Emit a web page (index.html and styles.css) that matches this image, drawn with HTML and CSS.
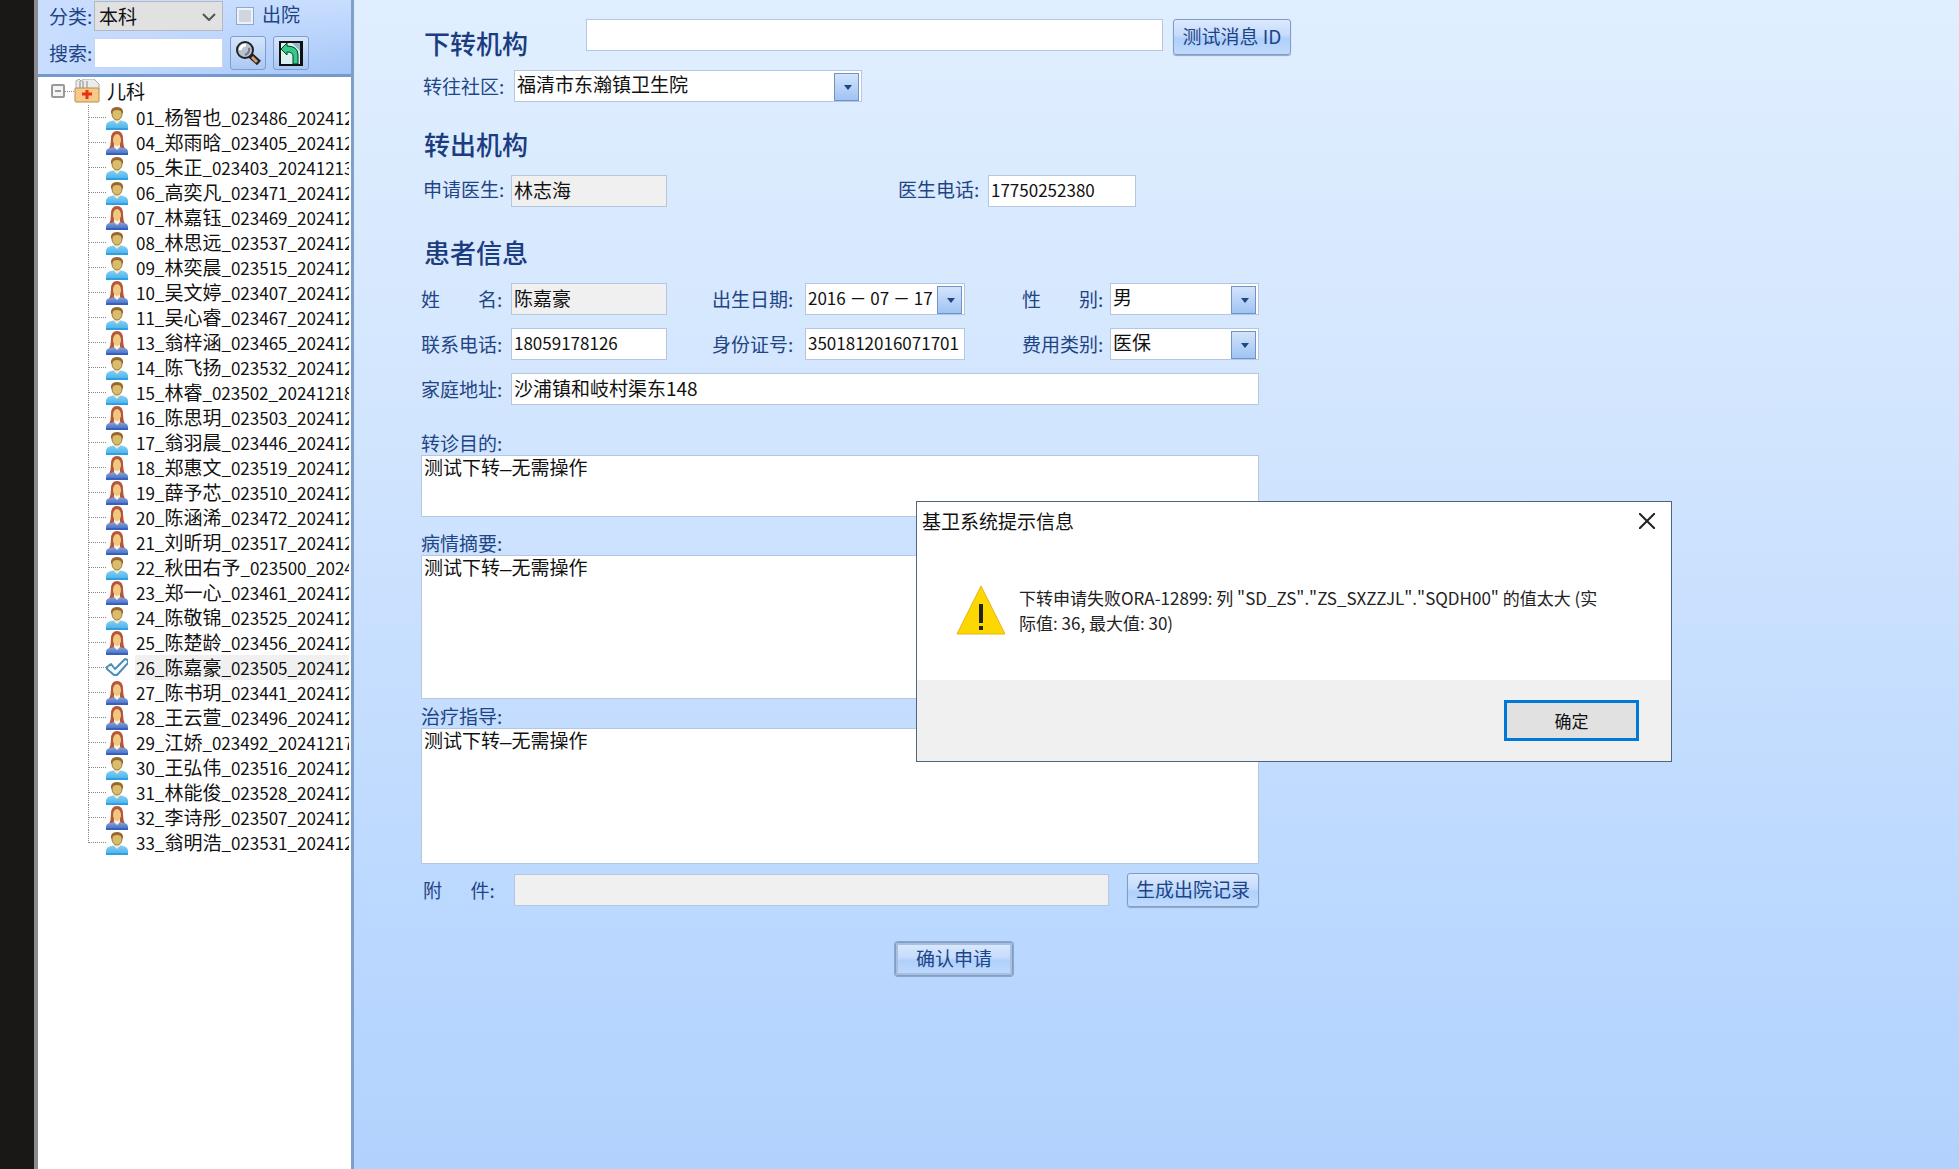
FILE: index.html
```html
<!DOCTYPE html>
<html lang="zh-CN">
<head>
  <meta charset="UTF-8">
  <meta name="viewport" content="width=device-width, initial-scale=1.0">
  <title>下转申请</title>
  <link rel="stylesheet" href="styles.css">
</head>
<body>
  <!-- Icons shared by the patient tree -->
  <svg class="sprite" aria-hidden="true">
    <defs>
      <linearGradient id="shirt" x1="0" y1="0" x2="0" y2="1"><stop offset="0" stop-color="#8bd0f2"/><stop offset="1" stop-color="#3fb0ec"/></linearGradient>
      <linearGradient id="dress" x1="0" y1="0" x2="0" y2="1"><stop offset="0" stop-color="#8aa4dc"/><stop offset="1" stop-color="#3a66c4"/></linearGradient>
    </defs>
    <symbol id="male" viewBox="0 0 22 24">
      <path d="M0 24v-4q0-4 5-5l4-1h4l4 1q5 1 5 5v4z" fill="url(#shirt)"/>
      <path d="M8 12h6v3l-3 3-3-3z" fill="#f6ead0"/>
      <ellipse cx="11" cy="8" rx="5" ry="6" fill="#d9bd6c" stroke="#9a7838"/>
      <path d="M5 8Q4 1 11 1t6 7l-1-1q-1-3-5-3T6 7z" fill="#99662f"/>
      <path d="M0 23h22" stroke="#2f9fe0" stroke-width="2"/>
    </symbol>
    <symbol id="female" viewBox="0 0 22 24">
      <path d="M3 18Q5 14 5 8q0-8 6-8t6 8q0 6 2 10z" fill="#b5553a"/>
      <path d="M0 24v-3q0-4 5-4l3-1h6l3 1q5 0 5 4v3z" fill="url(#dress)"/>
      <path d="M8 12h6v4l-3 3-3-3z" fill="#fff1dc"/>
      <ellipse cx="11" cy="9" rx="4" ry="6" fill="#f0c880"/>
      <path d="M0 23h22" stroke="#3560bd" stroke-width="2"/>
    </symbol>
    <symbol id="check" viewBox="0 0 22 24">
      <path d="M1 11l4-3 4 5L19 3l3 1v3L11 19H8L1 13z" fill="#f4faff" stroke="#4d8eb4" stroke-width="2" stroke-linejoin="round"/>
    </symbol>
  </svg>

  <aside class="sidebar">
    <div class="filter">
      <div class="filter-row">
        <label for="category">分类:</label>
        <span class="category"><select id="category"><option>本科</option></select><svg viewBox="0 0 14 8"><path d="M1 1l6 6 6-6" fill="none" stroke="#555" stroke-width="2"/></svg></span>
        <input type="checkbox" id="discharged" class="tick">
        <label for="discharged" class="tick-label">出院</label>
      </div>
      <div class="filter-row">
        <label for="search">搜索:</label>
        <input type="text" id="search" class="search">
        <button type="button" class="tool" aria-label="查找">
          <svg viewBox="0 0 26 26"><path d="M15 15l9 8" stroke="#222" stroke-width="6"/><path d="M17 17l5 5" stroke="#d89a6a" stroke-width="3"/><circle cx="10" cy="10" r="8" fill="#b9c3cf" stroke="#222" stroke-width="2"/><path d="M5 10q1-5 6-5" fill="none" stroke="#fff" stroke-width="3"/><path d="M14 8q1 5-4 7" fill="none" stroke="#778" stroke-width="2"/></svg>
        </button>
        <button type="button" class="tool" aria-label="返回">
          <svg viewBox="0 0 26 26"><path d="M2 2h22v23H2z" fill="#d9f3ee" stroke="#111" stroke-width="2"/><path d="M14 3h9v9z" fill="#8fb8cc"/><path d="M3 9l6-6v3q11 0 11 9v9h-5v-8q0-4-6-4v3z" fill="#35c98a" stroke="#063b28"/><path d="M23 3v21" stroke="#111" stroke-width="2"/></svg>
        </button>
      </div>
    </div>
    <div class="tree">
      <div class="tree-root">
        <svg class="toggle" viewBox="0 0 14 14"><rect x="1" y="1" width="12" height="12" rx="1" fill="#f4f4f4" stroke="#999" stroke-width="2"/><path d="M4 7h6" stroke="#444"/></svg>
        <i class="dots"></i>
        <svg class="folder" viewBox="0 0 26 24"><path d="M2 10V2l3-2 2 2 3-2h10l5 5v6z" fill="#ececec" stroke="#aaa"/><path d="M6 2v7M9 2v7M13 2v7" stroke="#888"/><rect x="1" y="9" width="24" height="14" rx="1" fill="#f5c98a" stroke="#c08a45"/><path d="M13 11v9M8 15h10" stroke="#e8330f" stroke-width="3"/></svg>
        <span>儿科</span>
      </div>
      <ul class="patients" id="patients"></ul>
    </div>
  </aside>

  <main class="content">
    <form class="referral">
      <div class="row first">
        <h2>下转机构</h2>
        <input type="text" class="message" aria-label="消息 ID">
        <button type="button" class="btn">测试消息 ID</button>
      </div>
      <div class="row community">
        <label for="community">转往社区:</label>
        <span class="combo"><select id="community"><option>福清市东瀚镇卫生院</option></select></span>
      </div>

      <h2>转出机构</h2>
      <div class="row doctor">
        <label for="doctor">申请医生:</label>
        <input type="text" id="doctor" value="林志海" readonly>
        <label for="doctorPhone">医生电话:</label>
        <input type="text" id="doctorPhone" class="num" value="17750252380">
      </div>

      <h2>患者信息</h2>
      <div class="row fields">
        <label for="name">姓　　名:</label>
        <input type="text" id="name" value="陈嘉豪" readonly>
        <label for="birthday">出生日期:</label>
        <span class="combo"><input type="text" id="birthday" class="num" value="2016 － 07 － 17"></span>
        <label for="gender">性　　别:</label>
        <span class="combo"><select id="gender"><option>男</option></select></span>
        <label for="phone">联系电话:</label>
        <input type="text" id="phone" class="num" value="18059178126">
        <label for="idCard">身份证号:</label>
        <input type="text" id="idCard" class="num" value="3501812016071701">
        <label for="feeType">费用类别:</label>
        <span class="combo"><select id="feeType"><option>医保</option></select></span>
        <label for="address">家庭地址:</label>
        <input type="text" id="address" class="wide" value="沙浦镇和岐村渠东148">
      </div>

      <label class="area-label purpose-label" for="purpose">转诊目的:</label>
      <textarea id="purpose" class="purpose">测试下转—无需操作</textarea>
      <label class="area-label summary-label" for="summary">病情摘要:</label>
      <textarea id="summary" class="summary">测试下转—无需操作</textarea>
      <label class="area-label guide-label" for="guide">治疗指导:</label>
      <textarea id="guide" class="guide">测试下转—无需操作</textarea>

      <div class="row attach">
        <label for="attachment">附　&ensp;件:</label>
        <input type="text" id="attachment" readonly>
        <button type="button" class="btn">生成出院记录</button>
      </div>
      <button type="button" class="btn confirm">确认申请</button>
    </form>
  </main>

  <div class="dialog" role="alertdialog" aria-labelledby="dialogTitle">
    <div class="dialog-head">
      <span id="dialogTitle">基卫系统提示信息</span>
      <button type="button" class="close" aria-label="关闭"><svg viewBox="0 0 16 16"><path d="M0 0l16 16M16 0L0 16" stroke="#222" stroke-width="2"/></svg></button>
    </div>
    <div class="dialog-body">
      <svg class="warning" viewBox="0 0 50 50"><path d="M25 1l24 48H1z" fill="#fcd800" stroke="#e3b320"/><path d="M25 19v19M25 41v4" stroke="#222" stroke-width="4"/></svg>
      <p>下转申请失败ORA-12899: 列 "SD_ZS"."ZS_SXZZJL"."SQDH00" 的值太大 (实<br>际值: 36, 最大值: 30)</p>
    </div>
    <div class="dialog-foot">
      <button type="button" class="ok">确定</button>
    </div>
  </div>

  <script>
    // bed number, name, record number, date, icon
    const patients = [
      ["01", "杨智也", "023486", "202412", "male"],
      ["04", "郑雨晗", "023405", "202412", "female"],
      ["05", "朱正", "023403", "20241213", "male"],
      ["06", "高奕凡", "023471", "202412", "male"],
      ["07", "林嘉钰", "023469", "202412", "female"],
      ["08", "林思远", "023537", "202412", "male"],
      ["09", "林奕晨", "023515", "202412", "male"],
      ["10", "吴文婷", "023407", "202412", "female"],
      ["11", "吴心睿", "023467", "202412", "male"],
      ["13", "翁梓涵", "023465", "202412", "female"],
      ["14", "陈飞扬", "023532", "202412", "male"],
      ["15", "林睿", "023502", "20241218", "male"],
      ["16", "陈思玥", "023503", "202412", "female"],
      ["17", "翁羽晨", "023446", "202412", "male"],
      ["18", "郑惠文", "023519", "202412", "female"],
      ["19", "薛予芯", "023510", "202412", "female"],
      ["20", "陈涵浠", "023472", "202412", "female"],
      ["21", "刘昕玥", "023517", "202412", "female"],
      ["22", "秋田右予", "023500", "2024", "male"],
      ["23", "郑一心", "023461", "202412", "female"],
      ["24", "陈敬锦", "023525", "202412", "male"],
      ["25", "陈楚龄", "023456", "202412", "female"],
      ["26", "陈嘉豪", "023505", "202412", "check"],
      ["27", "陈书玥", "023441", "202412", "female"],
      ["28", "王云萱", "023496", "202412", "female"],
      ["29", "江娇", "023492", "20241217", "female"],
      ["30", "王弘伟", "023516", "202412", "male"],
      ["31", "林能俊", "023528", "202412", "male"],
      ["32", "李诗彤", "023507", "202412", "female"],
      ["33", "翁明浩", "023531", "202412", "male"]
    ];

    document.getElementById("patients").innerHTML = patients.map(([bed, name, no, date, icon]) =>
      `<li class="${icon}"><i class="dots"></i><svg><use href="#${icon}"/></svg><span class="patient">${bed}_<span class="name">${name}</span>_${no}_${date}</span></li>`
    ).join("");
  </script>
</body>
</html>
```
FILE: styles.css
```css
* {
  box-sizing: border-box;
}

body {
  margin: 0;
  min-height: 100vh;
  display: flex;
  border-left: 34px solid #1a1817;
  font-family: "Noto Sans CJK SC", sans-serif;
  font-size: 19px;
  line-height: 24px;
  color: #1f4585;
  background: #fff;
}

input, select, textarea, button {
  font: inherit;
  margin: 0;
}

label {
  white-space: nowrap;
}

.sprite {
  position: absolute;
  width: 0;
  height: 0;
}

/* sidebar */
.sidebar {
  width: 320px;
  flex: none;
  display: flex;
  flex-direction: column;
  border-left: 4px solid #8c8c90;
  border-right: 3px solid #7f9fcb;
}

.filter {
  height: 77px;
  padding: 1px 0 0 11px;
  border-bottom: 3px solid #7499cc;
  background: linear-gradient(90deg, #c9deff, transparent), linear-gradient(#c9deff, #a5c6f8);
}

.filter-row {
  display: flex;
  align-items: center;
  height: 30px;
}

.filter-row + .filter-row {
  height: 34px;
  margin-top: 5px;
}

.filter-row label:first-child {
  width: 45px;
}

.category {
  position: relative;
  width: 129px;
  height: 30px;
}

.category select {
  appearance: none;
  width: 100%;
  height: 30px;
  padding: 0 4px;
  border: 1px solid #b4b8be;
  border-radius: 0;
  background: #e1e1e1;
  color: #111;
}

.category svg {
  position: absolute;
  right: 7px;
  top: 12px;
  width: 14px;
  height: 8px;
}

.tick {
  appearance: none;
  width: 18px;
  height: 18px;
  margin-left: 13px;
  border: 1px solid #8ea9cd;
  background: #cfd6df;
  box-shadow: inset 0 0 0 2px #eef3fa;
}

.tick-label {
  margin-left: 8px;
  padding-bottom: 4px;
}

.search {
  width: 129px;
  height: 30px;
  border: 1px solid #c3d5ef;
}

.tool {
  width: 36px;
  height: 34px;
  margin-left: 7px;
  padding: 3px 4px;
  border: 1px solid #7f9dca;
  border-radius: 3px;
  background: linear-gradient(#d5e5fc, #a9c8f5);
}

.tool svg {
  display: block;
  width: 26px;
  height: 26px;
}

.tree {
  flex: 1;
  margin-right: 2px;
  background: #fff;
  color: #111;
  overflow: hidden;
}

.tree-root {
  display: flex;
  align-items: center;
  height: 28px;
  padding-left: 13px;
}

.toggle {
  width: 14px;
  height: 14px;
}

.dots {
  flex: none;
  width: 9px;
  border-top: 1px dotted #888;
}

.folder {
  width: 26px;
  height: 24px;
  margin-right: 7px;
}

.patients {
  margin: 0;
  padding: 0 0 0 50px;
  list-style: none;
}

.patients li {
  display: flex;
  align-items: center;
  height: 25px;
  border-left: 1px dotted #888;
}

/* the trunk of the tree stops at the last branch */
.patients li:last-child {
  height: 13px;
  align-items: flex-end;
}

.patients li:last-child svg,
.patients li:last-child .patient {
  margin-bottom: -12px;
}

.patients .dots {
  width: 17px;
}

.patients svg {
  width: 22px;
  height: 24px;
  flex: none;
}

.patient {
  flex: 1;
  min-width: 0;
  height: 25px;
  margin-left: 7px;
  padding-left: 1px;
  font-size: 17px;
  line-height: 24px;
  white-space: nowrap;
}

.name {
  font-size: 19px;
}

.check .patient {
  background: #f0f0f0;
}

/* referral form */
.content {
  flex: 1;
  padding: 19px 0 0 67px;
  background: linear-gradient(#e0efff, #d5e7fe 30%, #b9d7ff 82%, #b2d2fd);
}

.referral {
  width: 870px;
}

h2 {
  margin: 26px 0 15px 3px;
  font-size: 26px;
  font-weight: 500;
  line-height: 32px;
  color: #1c3c80;
}

.row {
  display: flex;
  align-items: center;
}

.referral input,
.referral select {
  height: 32px;
  min-width: 0;
  padding: 0 2px 4px;
  border: 1px solid #b5c6de;
  border-radius: 0;
  background: #fff;
  color: #111;
}

.referral input[readonly] {
  background: #f0f0f0;
}

.referral .num {
  font-size: 17px;
}

.combo {
  position: relative;
  display: flex;
}

.combo select,
.combo input {
  appearance: none;
  width: 100%;
}

.combo::before {
  content: "";
  position: absolute;
  right: 3px;
  top: 3px;
  width: 23px;
  height: 26px;
  border: 1px solid #6f93c4;
  background: linear-gradient(#d3e4fb, #9fc3f3);
  pointer-events: none;
}

.combo::after {
  content: "";
  position: absolute;
  right: 10px;
  top: 15px;
  border: 4px solid transparent;
  border-top: 5px solid #1f4585;
  border-bottom: 0;
  pointer-events: none;
}

.first {
  height: 36px;
}

.first h2 {
  width: 162px;
  margin: 0 0 0 3px;
  align-self: flex-end;
  line-height: 24px;
}

.first .message {
  flex: 1;
  margin-right: 10px;
  align-self: flex-start;
}

.first .btn {
  width: 118px;
  height: 36px;
}

.community {
  margin-top: 15px;
}

.community label {
  width: 93px;
  padding-left: 2px;
}

.community .combo {
  width: 348px;
}

.doctor {
  display: grid;
  grid-template-columns: 90px 156px 229px 92px 148px;
}

.doctor label {
  padding: 0 0 4px 2px;
}

.doctor label:nth-of-type(2) {
  grid-column: 4;
}

.doctor + h2 {
  margin-top: 29px;
}

.fields {
  display: grid;
  grid-template-columns: 90px 156px 45px 93px 160px 57px 88px 149px;
  row-gap: 13px;
}

.fields > :nth-child(6n + 3) {
  grid-column: 4;
}

.fields > :nth-child(6n + 5) {
  grid-column: 7;
}

.fields .wide {
  grid-column: 2 / -1;
}

.area-label {
  display: block;
}

.purpose-label {
  margin-top: 26px;
}

.summary-label {
  margin-top: 14px;
}

.guide-label {
  margin-top: 5px;
}

textarea {
  display: block;
  width: 838px;
  padding: 2px;
  border: 1px solid #b5c6de;
  background: #fff;
  color: #111;
  resize: none;
}

.referral textarea {
  font-family: "Liberation Mono", "Noto Sans CJK SC", monospace;
}

.purpose {
  height: 62px;
}

.summary {
  height: 144px;
}

.guide {
  height: 136px;
}

.attach {
  width: 838px;
  margin-top: 9px;
}

.attach label {
  width: 93px;
  padding-left: 2px;
}

.attach input {
  flex: 1;
  margin-right: 18px;
}

.btn {
  height: 34px;
  padding: 0 0 3px;
  border: 1px solid #7f9dc6;
  border-radius: 3px;
  background: linear-gradient(#dbe9fd, #c5dcfc 45%, #b0d0fa 55%, #bfdafd);
  box-shadow: 0 1px 1px #8ea6c6;
  color: #1c4488;
  white-space: nowrap;
}

.attach .btn {
  width: 132px;
}

.confirm {
  display: block;
  width: 118px;
  margin: 35px 0 0 474px;
  box-shadow: inset 0 0 0 2px #a9bfe0, 0 0 0 1px #8ea6c6;
}

/* message box floating over the form */
.dialog {
  position: absolute;
  left: 916px;
  top: 501px;
  width: 756px;
  border: 1px solid #4e6580;
  background: #fff;
  color: #222;
}

.dialog-head {
  display: flex;
  justify-content: space-between;
  align-items: center;
  height: 38px;
  padding: 0 16px 0 5px;
  color: #111;
}

.close {
  width: 16px;
  height: 16px;
  padding: 0;
  border: 0;
  background: none;
}

.close svg {
  display: block;
}

.dialog-body {
  display: flex;
  gap: 13px;
  height: 140px;
  padding: 45px 39px 0;
}

.dialog-body p {
  margin: 0;
  font-size: 17px;
  line-height: 25px;
  white-space: nowrap;
}

.warning {
  width: 50px;
  height: 50px;
  flex: none;
}

.dialog-foot {
  display: flex;
  justify-content: flex-end;
  height: 81px;
  padding: 20px 32px;
  background: #f0f0f0;
}

.ok {
  width: 135px;
  height: 41px;
  padding: 0;
  border: 3px solid #0078d7;
  background: #e1e1e1;
  color: #111;
  font-size: 17px;
}
```
